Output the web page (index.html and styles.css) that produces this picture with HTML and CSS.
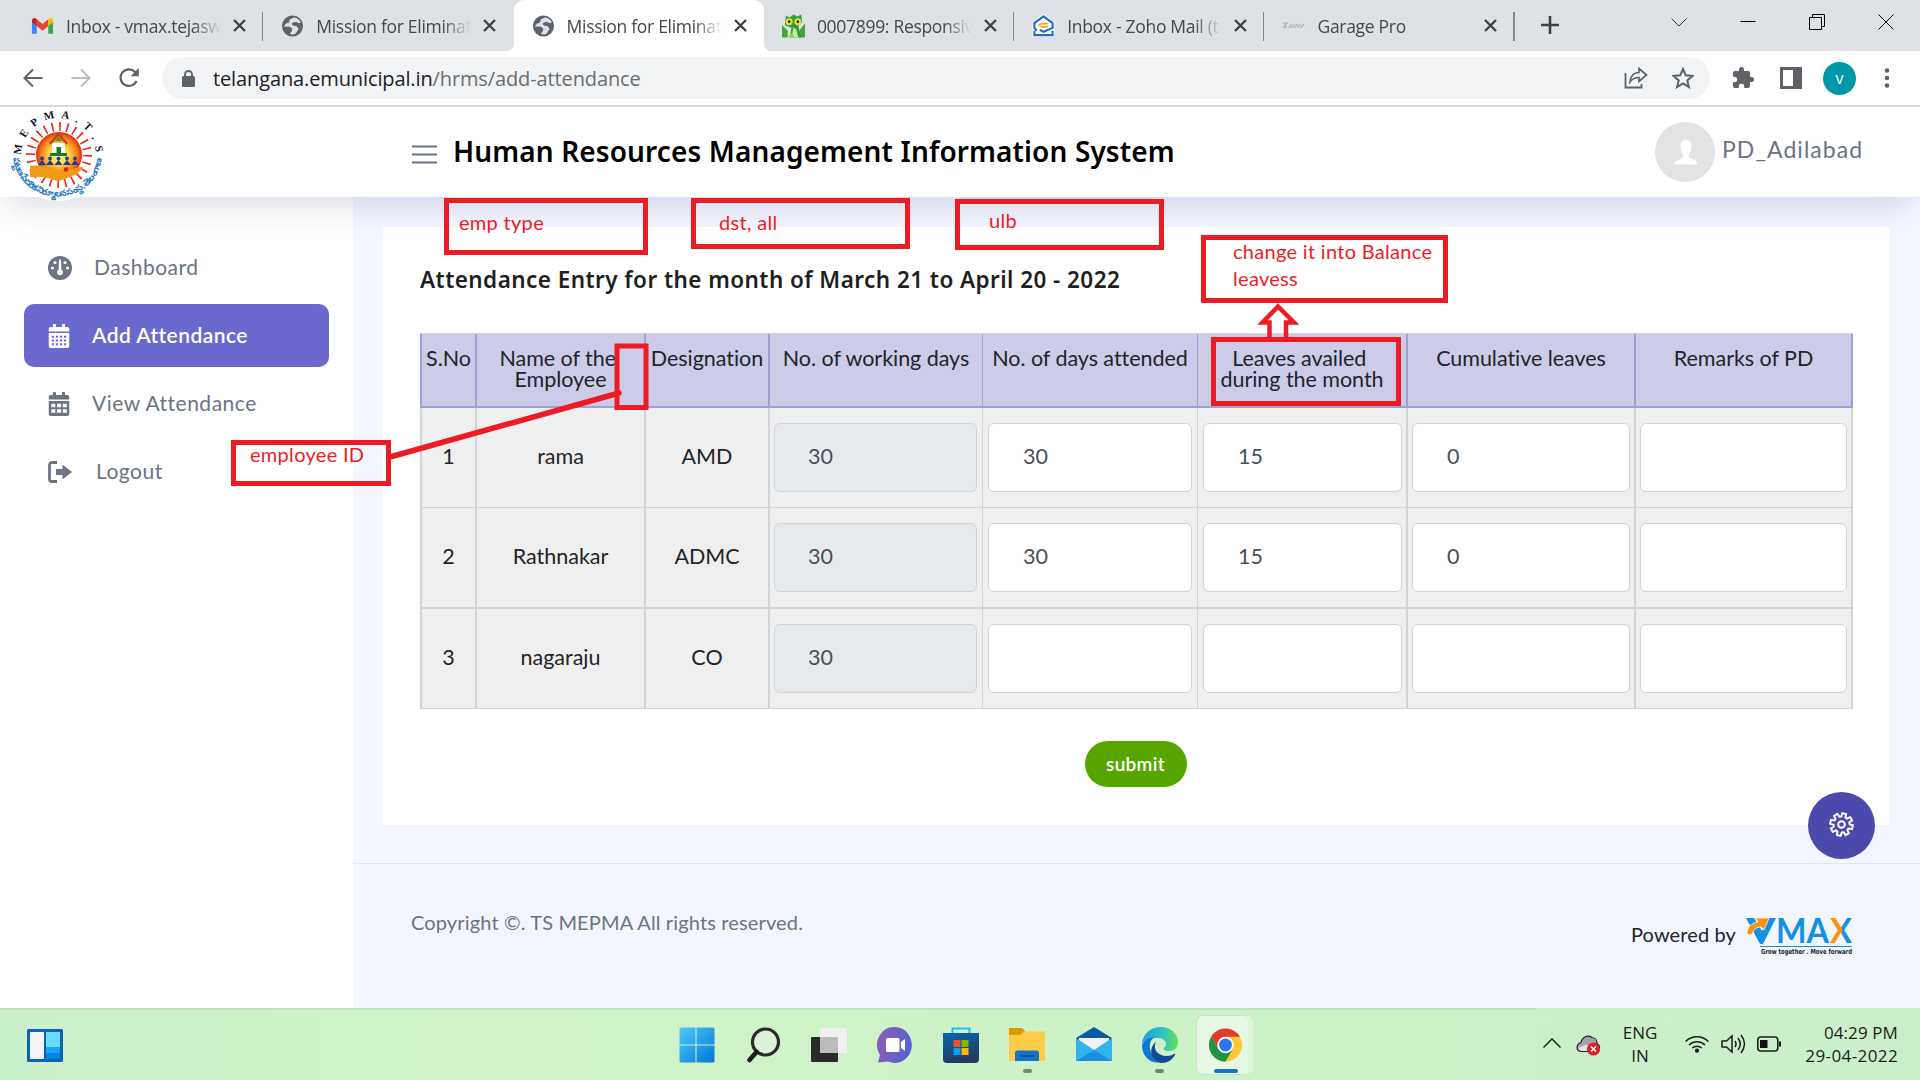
FILE: index.html
```html
<!DOCTYPE html>
<html lang="en">
<head>
<meta charset="utf-8">
<title>Human Resources Management Information System</title>
<link rel="stylesheet" href="styles.css">
</head>
<body>
<svg width="0" height="0" class="defs">
  <defs>
    <symbol id="x" viewBox="0 0 13 13"><path d="M1 1L12 12M12 1L1 12" stroke="#3c4043" stroke-width="2.3"/></symbol>
    <symbol id="globe" viewBox="0 0 24 24"><circle cx="12" cy="12" r="11" fill="#5f6368"/><path d="M13.5 3.2L9 5.2 8.6 8 5 9.6 3 12.4l6.4.3 2.4 2-.6 2.8-2 2.6C12.600 21.600 16 20.400 16.400 18l2-3-2-2.800-4-.6-1.400-2 2-1.500 2.600-.4 3.600 1.300 1.400-1C19.500 5.500 16.500 3.500 13.500 3.200z" fill="#dee1e6"/></symbol>
    <symbol id="cal" viewBox="0 0 448 512"><path fill="currentColor" d="M0 464c0 26.500 21.500 48 48 48h352c26.500 0 48-21.500 48-48V192H0v272zM400 64h-48V12c0-6.600-5.400-12-12-12h-40c-6.600 0-12 5.400-12 12v52H160V12c0-6.600-5.400-12-12-12h-40c-6.600 0-12 5.400-12 12v52H48C21.500 64 0 85.500 0 112v48h448v-48c0-26.500-21.500-48-48-48z"/></symbol>
  </defs>
</svg>

<div class="tabstrip">
  <div class="tabs">
    <div class="tab">
      <svg class="fav" viewBox="0 0 24 24"><path d="M1 7v13h5V10z" fill="#4285f4"/><path d="M18 10v10h5V7z" fill="#34a853"/><path d="M6 5l6 5 6-5v7l-6 5-6-5z" fill="#ea4335"/><path d="M1 7c0-4 3-4 5-2v7L1 8z" fill="#c5221f"/><path d="M23 7c0-4-3-4-5-2v7l5-4z" fill="#fbbc04"/></svg>
      <span class="title">Inbox - vmax.tejaswi</span><svg class="close"><use href="#x"/></svg>
    </div>
    <div class="tab nosep">
      <svg class="fav"><use href="#globe"/></svg>
      <span class="title">Mission for Eliminat</span><svg class="close"><use href="#x"/></svg>
    </div>
    <div class="tab active nosep">
      <svg class="fav"><use href="#globe"/></svg>
      <span class="title">Mission for Eliminat</span><svg class="close"><use href="#x"/></svg>
    </div>
    <div class="tab">
      <svg class="fav" viewBox="0 0 24 24"><path d="M0 11l6 6v7H0zM24 9l-6 8v7h6z" fill="#43a738"/><path d="M4 1l4 2 4-3 4 2 4-2 1 8-4 4 3 12H8l2-10-7-3z" fill="#2f9e3b"/><path d="M10 24l2-11 3 3 2 8z" fill="#c9e8a6"/><path d="M7 24l2-6 4 6z" fill="#8fd13b"/><circle cx="7.500" cy="7.500" r="3.600" fill="#f2dc2c"/><circle cx="16.500" cy="7.500" r="3.600" fill="#f2dc2c"/><circle cx="7.500" cy="7.500" r="1.400" fill="#222"/><circle cx="16.500" cy="7.500" r="1.400" fill="#222"/></svg>
      <span class="title">0007899: Responsiv</span><svg class="close"><use href="#x"/></svg>
    </div>
    <div class="tab">
      <svg class="fav" viewBox="0 0 24 24"><path d="M2 9L12 1l10 8v13H2z" fill="#fff" stroke="#fff" stroke-width="3"/><path d="M5 17L2.500 14V9L12 2l9.500 7v5L12 18l-4-2M2.500 17v4.500h19V17" fill="none" stroke="#1f70c1" stroke-width="2.200"/><path d="M7 11c2-2.500 6-1 10-1.500M7 11c2 2.500 6 2.500 10 1.500" fill="none" stroke="#f5a81c" stroke-width="1.900"/></svg>
      <span class="title">Inbox - Zoho Mail (t</span><svg class="close"><use href="#x"/></svg>
    </div>
    <div class="tab">
      <svg class="fav" viewBox="0 0 24 24"><path d="M1 9h4l-3 4h3M7 14l3-4M10 14l3-4M13 14l3-4M16 14l3-4M19 14l4-4" stroke="#b0b3b7" fill="none" stroke-width="1.500"/></svg>
      <span class="title">Garage Pro</span><svg class="close"><use href="#x"/></svg>
    </div>
  </div>
  <svg class="plus" viewBox="0 0 20 20"><path d="M10 1v18M1 10h18" stroke="#3c4043" stroke-width="2.600"/></svg>
  <div class="winctl">
    <svg viewBox="0 0 16 16"><path d="M.5 4.500L8 12l7.500-7.500" fill="none" stroke="#333"/></svg>
    <svg viewBox="0 0 16 16"><path d="M.5 7.500h15" stroke="#000"/></svg>
    <svg viewBox="0 0 16 16"><path d="M.5 3.500h12v12H.5zM3.500 3.500v-3h12v12h-3" fill="none" stroke="#000"/></svg>
    <svg viewBox="0 0 16 16"><path d="M.5.5l15 15M15.500.5l-15 15" fill="none" stroke="#000"/></svg>
  </div>
</div>

<div class="toolbar">
  <div class="nav">
    <svg viewBox="0 0 20 20"><path d="M19.500 10H2M10 1.500L1.500 10l8.500 8.500" fill="none" stroke="#5f6368" stroke-width="2"/></svg>
    <svg viewBox="0 0 20 20"><path d="M.5 10H18M10 1.500l8.500 8.500-8.500 8.500" fill="none" stroke="#babcbe" stroke-width="2"/></svg>
    <svg viewBox="0 0 20 20"><path d="M17.500 13a8.300 8.300 0 1 1-1.500-9l2 2.200" fill="none" stroke="#5f6368" stroke-width="2.200"/><path d="M19.800 0v8.200h-8.200z" fill="#5f6368"/></svg>
  </div>
  <div class="omnibox">
    <svg class="lock" viewBox="0 0 13 17"><rect y="6" width="13" height="11" rx="1.500" fill="#5f6368"/><path d="M3 7V4.500a3.500 3.500 0 0 1 7 0V7" fill="none" stroke="#5f6368" stroke-width="1.900"/></svg>
    <span class="url"><b>telangana.emunicipal.in</b>/hrms/add-attendance</span>
    <svg class="share" viewBox="0 0 24 22"><path d="M1.500 6v14.500h16V17" fill="none" stroke="#5f6368" stroke-width="1.800"/><path d="M15 1.500l7.500 6.500-7.500 6.500v-4c-4 0-6.500 1-9 4.500.5-5 3.500-9.500 9-9.500z" fill="none" stroke="#5f6368" stroke-width="1.700"/></svg>
    <svg class="star" viewBox="0 0 22 22"><path d="M11 2l2.700 6.300 6.800.6-5.200 4.500 1.600 6.700L11 16.500l-5.900 3.600 1.600-6.700L1.500 8.900l6.800-.6z" fill="none" stroke="#5f6368" stroke-width="2"/></svg>
  </div>
  <svg class="ext" viewBox="1 1 22 22"><path fill="#5f6368" d="M20.500 11H19V7a2 2 0 0 0-2-2h-4V3.500a2.500 2.500 0 0 0-5 0V5H4a2 2 0 0 0-2 2v3.800h1.500a2.700 2.700 0 0 1 0 5.400H2V20a2 2 0 0 0 2 2h3.800v-1.500a2.700 2.700 0 0 1 5.400 0V22H17a2 2 0 0 0 2-2v-4h1.500a2.500 2.500 0 0 0 0-5z"/></svg>
  <svg class="panel" viewBox="0 0 22 22"><path d="M0 0h22v22H0zM3 3v16h10V3z" fill="#5f6368" fill-rule="evenodd"/></svg>
  <span class="profile">v</span>
  <svg class="dots" viewBox="0 0 6 20"><circle cx="3" cy="2.500" r="2.300"/><circle cx="3" cy="10" r="2.300"/><circle cx="3" cy="17.500" r="2.300"/></svg>
</div>

<header class="header">
  <svg class="logo" viewBox="0 0 96 96">
    <defs>
      <radialGradient id="sun"><stop offset="0" stop-color="#fff7a8"/><stop offset=".45" stop-color="#ffd23c"/><stop offset=".8" stop-color="#f47a1c"/><stop offset="1" stop-color="#e02512"/></radialGradient>
      <path id="arcTop" d="M12 48A37.500 37.500 0 0 1 87 49"/>
      <path id="arcBot" d="M4 49A44 42 0 0 0 93 45"/>
    </defs>
    <circle cx="49" cy="47" r="47" fill="#fff"/>
    <circle cx="50" cy="48" r="28.500" fill="none" stroke="#ea2a1c" stroke-width="9" stroke-dasharray="1.600 5.860"/>
    <circle cx="50" cy="48" r="23" fill="url(#sun)"/>
    <path d="M43 36h13v11H43z" fill="#fff"/><path d="M47.500 40h4.500v7h-4.500zM41 46h17v3H41z" fill="#1a7a32"/><path d="M41 37l8.500-10 8.500 10" fill="none" stroke="#c8441c" stroke-width="2.600"/><path d="M46 34l3.500-4 3.500 4z" fill="#2e9b44"/>
    <g fill="#1f3f91"><path d="M29 58l4-5 4 5zM37 58l4-5 4 5zM45.500 58l4-5 4 5zM54 58l4-5 4 5zM62 58l4-5 4 5z"/><circle cx="33" cy="51.500" r="1.900"/><circle cx="41" cy="51.500" r="1.900"/><circle cx="49.500" cy="51.500" r="1.900"/><circle cx="58" cy="51.500" r="1.900"/><circle cx="66" cy="51.500" r="1.900"/></g>
    <path d="M21 59c8-1 14 0 20 2l14 3c6-1 12-4 19-4-2 6-12 10-24 14-6 0-10-4-18-4H21z" fill="#f29a16"/><circle cx="57" cy="62.500" r="2.300" fill="#e3221b"/>
    <text class="logo-top"><textPath href="#arcTop" textLength="114">M E P M A . T . S</textPath></text>
    <text class="logo-bot"><textPath href="#arcBot" startOffset="2" textLength="128">పట్టణ పేదరిక నిర్మూలన సంస్థ , తెలంగాణ</textPath></text>
  </svg>
  <svg class="burger" viewBox="0 0 25 19"><path d="M0 1.500h25M0 9.500h25M0 17.500h25" stroke="#6c7383" stroke-width="2"/></svg>
  <h1>Human Resources Management Information System</h1>
  <svg class="avatar" viewBox="0 0 60 60"><circle cx="30" cy="30" r="30" fill="#e3e3e3"/><path d="M31 18c4 0 6 3 5.500 7.500-.3 3.500-2 5-2.500 7.500-.2 3 1 3.500 4 4.500 3 1.200 4 1.500 4.500 5H19.500c.5-3.500 1.500-3.800 4.500-5 3-1 4.200-1.500 4-4.500-.5-2.500-2.200-4-2.500-7.500C25 21 27 18 31 18z" fill="#fff"/></svg>
  <span class="user">PD_Adilabad</span>
</header>

<div class="body">
  <nav class="sidebar">
    <a class="item wide"><svg viewBox="0 0 24 24" class="i24"><circle cx="12" cy="12" r="12" fill="currentColor"/><g fill="#fff"><circle cx="4.500" cy="12" r="1.600"/><circle cx="7" cy="6.500" r="1.600"/><circle cx="17" cy="6.500" r="1.600"/><circle cx="19.500" cy="12" r="1.600"/><path d="M11 3.500h2l.4 10.200a3 3 0 1 1-2.800 0z"/></g></svg><span>Dashboard</span></a>
    <a class="item on"><svg viewBox="0 0 448 512" class="i22"><use href="#cal"/><path d="M70 250h48v44H70zM156 250h48v44h-48zM242 250h48v44h-48zM328 250h48v44h-48zM70 330h48v44H70zM156 330h48v44h-48zM242 330h48v44h-48zM328 330h48v44h-48zM70 410h48v44H70zM156 410h48v44h-48zM242 410h48v44h-48zM328 410h48v44h-48z" fill="#6c69ce"/></svg><span>Add Attendance</span></a>
    <a class="item"><svg viewBox="0 0 448 512" class="i22"><use href="#cal"/><path d="M60 250h86v76H60zM182 250h86v76h-86zM304 250h86v76h-86zM60 368h86v76H60zM182 368h86v76h-86zM304 368h86v76h-86z" fill="#fff"/></svg><span>View Attendance</span></a>
    <a class="item out"><svg viewBox="0 0 24 22" class="i24"><path d="M9 1.500H4a2.500 2.500 0 0 0-2.500 2.500v14A2.500 2.500 0 0 0 4 20.500h5" fill="none" stroke="currentColor" stroke-width="2.800"/><path d="M8 8h6.500V3.500L24 11l-9.500 7.500V14H8z" fill="currentColor"/></svg><span>Logout</span></a>
  </nav>

  <main class="main">
    <section class="card">
      <h2>Attendance Entry for the month of March 21 to April 20 - 2022</h2>
      <div class="grid">
        <div class="th">S.No</div><div class="th">Name of the&nbsp;<br>Employee</div><div class="th">Designation</div><div class="th">No. of working days</div><div class="th">No. of days attended</div><div class="th">Leaves availed&nbsp;<br>during the month</div><div class="th">Cumulative leaves</div><div class="th">Remarks of PD</div>
        <div class="td">1</div><div class="td">rama</div><div class="td">AMD</div><div class="td"><div class="in off">30</div></div><div class="td"><div class="in">30</div></div><div class="td"><div class="in">15</div></div><div class="td"><div class="in">0</div></div><div class="td"><div class="in"></div></div>
        <div class="td r2">2</div><div class="td r2">Rathnakar</div><div class="td r2">ADMC</div><div class="td r2"><div class="in off">30</div></div><div class="td r2"><div class="in">30</div></div><div class="td r2"><div class="in">15</div></div><div class="td r2"><div class="in">0</div></div><div class="td r2"><div class="in"></div></div>
        <div class="td">3</div><div class="td">nagaraju</div><div class="td">CO</div><div class="td"><div class="in off">30</div></div><div class="td"><div class="in"></div></div><div class="td"><div class="in"></div></div><div class="td"><div class="in"></div></div><div class="td"><div class="in"></div></div>
      </div>
      <button class="submit">submit</button>
    </section>
    <footer class="footer">
      <span class="copy">Copyright ©. TS MEPMA All rights reserved.</span>
      <span class="powered">Powered by</span>
      <svg class="vmax" viewBox="0 0 108 40">
        <defs><linearGradient id="xg"><stop offset=".55" stop-color="#fb9110"/><stop offset=".55" stop-color="#1591e3"/></linearGradient></defs>
        <path d="M0 1h8l8 13L22 1h8L17 27h-3z" fill="#1591e3"/><path d="M1 17C1 9 6 6 12 5L9 1h14l-5 12-3-3c-5 0-8 3-9 8z" fill="#fb9110" stroke="#f3f6ff" stroke-width=".8"/>
        <text class="vm" x="30" y="26" textLength="53" lengthAdjust="spacingAndGlyphs">MA</text><text class="vm vx" x="84" y="26" textLength="22" lengthAdjust="spacingAndGlyphs">X</text>
        <path d="M14 29.500h92" stroke="#1591e3"/>
        <text class="tag" x="15" y="37" textLength="91" lengthAdjust="spacingAndGlyphs">Grow together . Move forward</text>
      </svg>
    </footer>
  </main>
</div>

<div class="taskbar">
  <svg class="widgets" viewBox="0 0 36 33"><rect width="36" height="33" rx="1.500" fill="#0c62b8"/><rect x="3" y="3" width="14" height="27" rx="1" fill="#f4f4f6"/><path d="M19 3h14v15H19z" fill="#69dbff"/><path d="M19 18h14v6H19z" fill="#1ca4fb"/><path d="M19 24h14v6H19z" fill="#0883e6"/></svg>
  <div class="apps">
    <span class="app"><svg viewBox="0 0 36 36"><defs><linearGradient id="win" x2="1" y2="1"><stop stop-color="#4ccbfd"/><stop offset="1" stop-color="#0476d3"/></linearGradient></defs><path d="M2 .5h14.500v17H.5V2zM17.500.5H34a1.500 1.500 0 0 1 1.500 1.500v15.500h-18zM.5 18.500h16v17H2A1.500 1.500 0 0 1 .5 34zM17.500 18.500h18V34a1.500 1.500 0 0 1-1.500 1.500H17.500z" fill="url(#win)"/></svg></span>
    <span class="app"><svg viewBox="0 0 36 36"><circle cx="20.500" cy="15" r="13" fill="#d9f2da" stroke="#2b2a29" stroke-width="3.200"/><path d="M11.500 25l-7 8" stroke="#1d1c1b" stroke-width="4.500" stroke-linecap="round"/></svg></span>
    <span class="app"><svg viewBox="0 0 36 36"><rect y="10" width="27" height="25" rx="1" fill="#2a2a2a"/><rect x="9" y="1" width="27" height="25" rx="1" fill="#f0f0f0"/><path d="M9 10h18v16H9z" fill="#bcbcbc"/></svg></span>
    <span class="app"><svg viewBox="0 0 36 36"><defs><linearGradient id="chat" x1="0" y1=".3" x2="1" y2=".6"><stop stop-color="#8a5db0"/><stop offset="1" stop-color="#5463d6"/></linearGradient></defs><path d="M18 0a17 18 0 1 1-7 34.500L1 35.500 3 28A17 18 0 0 1 18 0z" fill="url(#chat)"/><rect x="9" y="11" width="13.500" height="14" rx="1.500" fill="#fff"/><path d="M24 15l4-3v12l-4-3z" fill="#fff"/></svg></span>
    <span class="app"><svg viewBox="0 0 36 36"><defs><linearGradient id="st" x2=".3" y2="1"><stop stop-color="#0568ad"/><stop offset="1" stop-color="#243a63"/></linearGradient></defs><path d="M9.500 7V1.500h17V7" fill="none" stroke="#1fc2f2" stroke-width="2"/><path d="M0 6h36v26a4 4 0 0 1-4 4H4a4 4 0 0 1-4-4z" fill="url(#st)"/><path d="M10.500 13h7v7h-7z" fill="#f25022"/><path d="M18.500 13h7v7h-7z" fill="#7fba00"/><path d="M10.500 21h7v7h-7z" fill="#00a4ef"/><path d="M18.500 21h7v7h-7z" fill="#ffb900"/></svg></span>
    <span class="app run"><svg viewBox="0 0 36 36"><path d="M0 1h13l3 3v6H0z" fill="#dd9b00"/><path d="M0 8h11l4-3.500h21V34H0z" fill="#fdcb4a"/><path d="M6 34v-8a2.500 2.500 0 0 1 2.500-2.500h19A2.500 2.500 0 0 1 30 26v8z" fill="#1374c8"/><path d="M11 29h14" stroke="#0a4f96" stroke-width="2"/></svg></span>
    <span class="app"><svg viewBox="0 0 36 36"><path d="M0 11L18 0l18 11v10H0z" fill="#0a5aa6"/><path d="M3 11h30v8L18 27 3 19z" fill="#f3f3f5"/><path d="M0 11l18 12 18-12v23H0z" fill="#31b4ee"/><path d="M0 34L18 23l18 11z" fill="#1b8fdc"/></svg></span>
    <span class="app run"><svg viewBox="0 0 36 36"><defs><linearGradient id="e1" y1=".5" y2=".5"><stop stop-color="#1f9fdb"/><stop offset=".6" stop-color="#2fc3c6"/><stop offset="1" stop-color="#67e04b"/></linearGradient></defs><path d="M0 17C1 6 9 0 19 0c10 0 17 7 17 15 0 6-4 9-9 9-4 0-6-1-5-3 1-1 2-2 2-4 0-3-3-6-8-6C8 11 2 13 0 17z" fill="url(#e1)"/><path d="M0 18c2-5 7-8 12-7.500-3 2-5 6-4 11 1 7 6 12 12 13.500C8 38 0 29 0 18z" fill="#0d78d2"/><path d="M14 15c-4 8 3 14 11 14 3 0 5-1 7-2 1-.5 1.500 0 1 1-3 5-7 8-14 8C10 34 5 22 14 15z" fill="#114a9b"/></svg></span>
    <span class="app cur"><svg viewBox="0 0 36 36"><circle cx="18" cy="18" r="17" fill="#fcc934"/><path d="M3.300 9.500A17 17 0 0 1 32.700 9.500H18L10.600 22z" fill="#e33b2e"/><path d="M3.300 9.500A17 17 0 0 0 18 35l7.400-12.700L18 26l-7.400-4z" fill="#1e9546"/><circle cx="18" cy="18" r="8.500" fill="#fff"/><circle cx="18" cy="18" r="6.600" fill="#2f76e8"/></svg></span>
  </div>
  <div class="tray">
    <svg class="up" viewBox="0 0 18 10"><path d="M.5 9.500L9 1l8.500 8.500" fill="none" stroke="#222" stroke-width="1.500"/></svg>
    <svg class="cloud" viewBox="0 0 25 21"><path d="M5 16.500C-.5 15.500 0 9 5 7.500 6 2 12-.5 16 2.500c4 0 5 4 5 6 4 2 3 8-1 8z" fill="#a3a3a3" stroke="#222" stroke-width="1.200"/><path d="M2 14c3-3 7-5 14-4l-2 6H5z" fill="#e3e3e3"/><circle cx="17.500" cy="14" r="6.600" fill="#d9202e"/><path d="M15 11.500l5 5M20 11.500l-5 5" stroke="#fff" stroke-width="1.500"/></svg>
    <div class="lang">ENG<br>IN</div>
    <svg class="wifi" viewBox="0 0 24 18"><g fill="none" stroke="#1c1c1c" stroke-width="1.600"><path d="M.6 6.500a16 16 0 0 1 22.800 0M4 10a11.500 11.500 0 0 1 16 0M7.300 13a7 7 0 0 1 9.400 0"/></g><circle cx="12" cy="15.700" r="2.100" fill="#1c1c1c"/></svg>
    <svg class="vol" viewBox="0 0 25 20"><g fill="none" stroke="#1c1c1c" stroke-width="1.500"><path d="M1 7h4.500L11 2v16l-5.500-5H1zM14 7q2 3 0 6M17 4q4.500 6 0 12M20 1q7 9 0 18"/></g></svg>
    <svg class="bat" viewBox="0 0 24 16"><rect x=".8" y="1" width="20" height="14" rx="3" fill="none" stroke="#1c1c1c" stroke-width="1.600"/><path d="M3 4h7.500v8H3z" fill="#111"/><path d="M22 5.500h2v5h-2z" fill="#1c1c1c"/></svg>
    <div class="clock">04:29 PM<br><span>29-04-2022</span></div>
  </div>
</div>

<div class="fab"><svg viewBox="-12 -12 24 24"><g fill="none" stroke="#fff" stroke-width="1.900" stroke-linejoin="round"><path transform="rotate(14)" d="M-1.900-10.800L1.900-10.800 2-7.500 3.900-6.750 6.300-9 9-6.300 6.750-3.900 7.500-2 10.800-1.900 10.800 1.900 7.500 2 6.750 3.900 9 6.300 6.300 9 3.900 6.750 2 7.500 1.900 10.800-1.900 10.800-2 7.500-3.900 6.750-6.300 9-9 6.300-6.750 3.900-7.500 2-10.800 1.900-10.800-1.900-7.500-2-6.750-3.900-9-6.300-6.300-9-3.900-6.750-2-7.500z"/><circle r="3.200"/></g></svg></div>

<!-- Review notes pinned over the page -->
<div class="notes">
  <svg viewBox="0 0 1920 1080"><g fill="none" stroke="#ed1c24" stroke-width="5">
    <path d="M446.500 200.500h199v52h-199zM693.500 200.500h214v46h-214zM957.500 201.500h204v46h-204zM1203.500 237.500h242v63h-242zM617 346h29v61.500h-29zM1213.500 339.500h185v64h-185zM233.500 442.500h155v41h-155z"/>
    <path d="M390 457L619 393" stroke-width="5.500" stroke-linecap="round"/>
    <path d="M1269.500 339v-16.500h-7l15.500-16 16 16h-8V339" stroke-width="4.500"/></g></svg>
  <span class="n1">emp type</span><span class="n2">dst, all</span><span class="n3">ulb</span><span class="n4">change it into Balance<br>leavess</span><span class="n5">employee ID</span>
</div>
</body>
</html>
```
FILE: styles.css
```css
*{box-sizing:border-box}
body{margin:0;width:1920px;height:1080px;overflow:hidden;display:flex;flex-direction:column;font-family:Lato,"Noto Sans",sans-serif;color:#212529;background:#fff;position:relative}
svg{display:block;flex:none}
.defs{position:absolute}

.tabstrip{height:51px;background:#dee1e6;display:flex;padding-left:13px;font-family:"Open Sans","Noto Sans",sans-serif}
.tabs{display:flex}
.tab{width:250.300px;display:flex;align-items:center;padding-left:18px;position:relative}
.tab::after{content:"";position:absolute;right:0;top:12px;width:1.500px;height:29px;background:#85888d}
.tab.nosep::after{display:none}
.tab.active{background:#fff;border-radius:10px 10px 0 0}
.tab.active::before{content:"";position:absolute;left:-8px;right:-8px;bottom:0;height:8px;background:radial-gradient(circle at 0 0,transparent 8px,#fff 8.500px) left/8px 8px no-repeat,radial-gradient(circle at 100% 0,transparent 8px,#fff 8.500px) right/8px 8px no-repeat}
.fav{width:23px;height:24px}
.title{margin-left:12px;width:155px;overflow:hidden;white-space:nowrap;font-size:17.500px;letter-spacing:-.3px;color:#45484d;-webkit-mask:linear-gradient(90deg,#000 82%,transparent);mask:linear-gradient(90deg,#000 82%,transparent)}
.close{width:13px;height:13px;margin-left:12px}
.plus{width:20px;height:20px;margin:15px 0 0 25px}
.winctl{display:flex;gap:53px;margin:14px 26px 0 auto}
.winctl svg{width:16px;height:16px}

.toolbar{height:56px;border-bottom:2px solid #dadbdd;display:flex;align-items:center;background:#fff}
.nav{display:flex;gap:28px;margin-left:23px;width:139px}
.nav svg{width:20px;height:20px}
.omnibox{width:1548px;height:42px;border-radius:21px;background:#f1f3f4;display:flex;align-items:center;padding-left:20px}
.lock{width:13px;height:17px}
.url{margin-left:18px;flex:1;font:20px "Open Sans","Noto Sans",sans-serif;letter-spacing:-.12px;color:#6a6e73;white-space:nowrap}
.url b{font-weight:400;color:#202124}
.share{width:24px;height:22px;margin-right:24px}
.star{width:22px;height:22px;margin-right:16px}
.ext{width:22px;height:22px;margin-left:22px}
.panel{width:22px;height:22px;margin-left:26px}
.profile{width:33px;height:33px;border-radius:50%;background:#0097a7;color:#fff;margin-left:21px;text-align:center;font:16px/32px "Open Sans",sans-serif}
.dots{width:6px;height:20px;margin-left:28px;fill:#5f6368}

.header{height:90px;display:flex;background:#fff;box-shadow:0 18px 30px -10px rgba(50,55,100,.18);position:relative;z-index:2}
.logo{width:96px;height:96px;margin:0 0 0 9px}
.logo-top{font:bold 11px "Liberation Serif",serif;fill:#15152b}
.logo-bot{font:bold 9px "Noto Sans Telugu","Noto Sans",sans-serif;fill:#2277bd}
.burger{width:25px;height:19px;margin:38px 0 0 307px}
h1{margin:26px 0 0 16px;font:600 28px/36px "Noto Sans",sans-serif;letter-spacing:.120px;color:#000;white-space:nowrap}
.avatar{width:60px;height:60px;margin:15px 0 0 auto}
.user{width:198px;margin:28px 0 0 7px;font-size:23px;line-height:28px;letter-spacing:1.050px;color:#6c7383}

.body{height:811px;display:flex}
.sidebar{width:353px;padding:39px 24px 0;display:flex;flex-direction:column;gap:5px}
.item{height:63px;border-radius:10px;display:flex;align-items:center;padding-left:24px;gap:22px;font-size:21px;letter-spacing:.5px;color:#6c7383}
.item span{padding-bottom:2px}
.item.on{background:#6c69ce;color:#fff;font-weight:600;letter-spacing:.450px}
.item.out{gap:24px}
.i24{width:24px;height:24px}
.i22{width:22px;height:24px}
.main{width:1567px;background:#f3f6ff;display:flex;flex-direction:column}
.card{margin:30px 30px 0;height:598px;background:#fff;padding:37px 37px 0;display:flex;flex-direction:column}
h2{margin:0 0 37px;font:600 22.500px/32px "Noto Sans",sans-serif;letter-spacing:.440px;color:#1f1f1f;white-space:nowrap}
.grid{display:grid;grid-template-columns:55px 169px 124px 213px 215px 210px 228px 217px;grid-template-rows:74px 100px 101px 100px;border-left:2px solid #cfd3da;border-top:1px solid #cfd3da;width:1433px;font-size:21.500px}
.th{background:#cccbe8;border-right:2px solid #a1a0d6;border-bottom:2px solid #a1a0d6;text-align:center;padding-top:14px;line-height:21.300px;letter-spacing:-.04px;white-space:nowrap}
.td{background:#efefef;border-right:2px solid #cfd3da;border-bottom:1px solid #cfd3da;display:flex;align-items:center;justify-content:center;padding:0 4px 3px}
.r2{border-bottom-width:2px}
.th:nth-child(8n+4),.th:nth-child(8n+5),.td:nth-child(8n+4),.td:nth-child(8n+5){border-right-width:1px}
.th:first-child{margin-left:-2px;border-left:2px solid #a1a0d6}
.td:has(.in){padding:0 4px}
.td:nth-child(8n+4):has(.in){padding-right:5px}
.td:nth-child(8n+5):has(.in){padding:0 5px}
.td:nth-child(8n+6):has(.in){padding-left:5px}
.in{flex:1;height:69px;border:1px solid #ced4da;border-radius:6px;background:#fff;padding-left:34px;line-height:65px;color:#495057}
.off{background:#e7eaed;padding-left:33px}
.submit{align-self:center;margin:32px 2px 0 0;width:102px;height:46px;border:0;border-radius:23px;background:#57a600;color:#fff;font:600 19px Lato,sans-serif;padding:0 0 1px;letter-spacing:.3px}
.footer{margin-top:38px;border-top:1px solid #e2e6ee;flex:1;display:flex;padding-left:58px}
.copy{margin-top:44px;font-size:20px;line-height:28px;letter-spacing:.140px;color:#6c7383}
.powered{margin:56px 10px 0 auto;font-size:20px;line-height:28px;letter-spacing:.120px}
.vmax{width:108px;height:40px;margin:53px 66px 0 0}
.vm{font:bold 35px Lato,sans-serif;fill:#1591e3}
.vx{fill:url(#xg)}
.tag{font:bold 7px "DejaVu Sans",sans-serif;fill:#222}

.taskbar{height:72px;background:linear-gradient(90deg,#caf0cb,#d2f3c9 25%,#cdf2c8 60%,#cbefcb);display:flex;position:relative;font-family:"Open Sans","Noto Sans",sans-serif}
.taskbar::before{content:"";position:absolute;left:0;top:0;width:1536px;height:2px;background:#bfe4bc}
.widgets{width:36px;height:33px;margin:21px 0 0 27px}
.apps{display:flex;margin-left:600px}
.app{width:66.200px;height:72px;padding:19px 0 0 15.500px;position:relative}
.app svg{width:36px;height:36px;position:relative}
.run::after,.cur::after{content:"";position:absolute;left:29px;bottom:7px;width:9px;height:4px;border-radius:2px;background:#728873}
.cur::after{left:21px;width:24px;background:#0f75d4}
.cur::before{content:"";position:absolute;left:4px;top:8px;width:51px;height:58px;border-radius:6px;background:#e6f7e4;box-shadow:5px 0 0 #dcf5dc,0 0 0 1px #c3e6c3}
.cur svg{width:35px}
.tray{margin-left:auto;margin-right:22px;display:flex;color:#1c1c1c;font-size:17px;line-height:23px}
.up{width:18px;height:10px;margin-top:30px}
.cloud{width:25px;height:21px;margin:27px 0 0 15px}
.lang{width:50px;text-align:center;margin:13px 0 0 14px;letter-spacing:-.1px}
.wifi{width:24px;height:18px;margin:27px 0 0 20px}
.vol{width:25px;height:20px;margin:26px 0 0 12px}
.bat{width:24px;height:16px;margin:28px 0 0 11px}
.clock{width:117px;text-align:right;margin-top:13px;white-space:nowrap;letter-spacing:.1px}
.clock span{letter-spacing:.4px}

.fab{position:absolute;z-index:3;left:1808px;top:792px;width:67px;height:67px;border-radius:50%;background:#4b49ac;display:flex;align-items:center;justify-content:center}
.fab svg{width:25px;height:25px;margin-bottom:2px}
.notes{position:absolute;inset:0;z-index:4;color:#ed1c24;font-size:20px;letter-spacing:.3px;line-height:27px;white-space:nowrap;pointer-events:none}
.notes svg{width:1920px;height:1080px}
.notes span{position:absolute}
.n1{left:459px;top:209px}
.n2{left:719px;top:209px}
.n3{left:989px;top:207px}
.n4{left:1233px;top:238px}
.n5{left:250px;top:441px}
```
